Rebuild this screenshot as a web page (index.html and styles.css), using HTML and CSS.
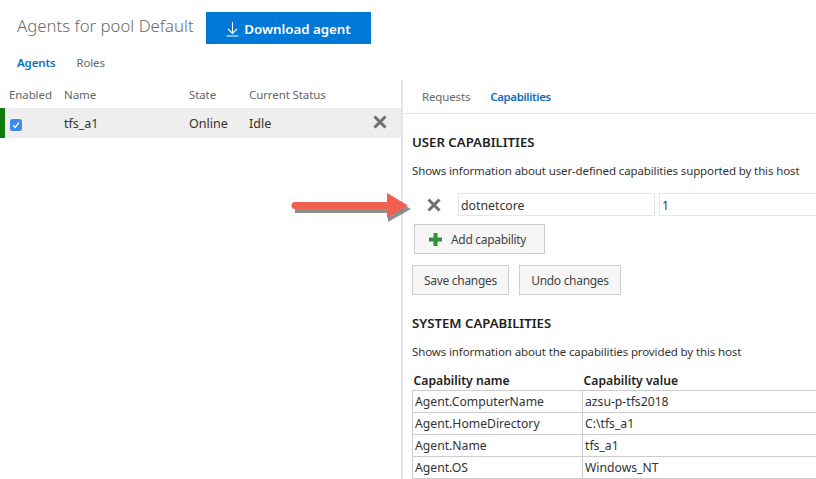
FILE: index.html
```html
<!DOCTYPE html>
<html lang="en">
<head>
    <meta charset="UTF-8">
    <title>Agents for pool Default</title>
    <link rel="stylesheet" href="styles.css">
</head>
<body>
    <header class="page-head">
        <h1>Agents for pool Default</h1>
        <button class="download-btn">
            <svg class="download-icon" width="13" height="16" viewBox="0 0 13 16"><path d="M6.500 1v11.500M2 8l4.500 4.500L11 8M.5 15h12" fill="none" stroke="#fff" stroke-width="1.100"/></svg>
            Download agent
        </button>
    </header>
    <nav class="main-tabs">
        <a class="tab active">Agents</a>
        <a class="tab">Roles</a>
    </nav>

    <div class="split">
        <section class="agents">
            <div class="agent-cols agent-head">
                <span>Enabled</span><span>Name</span><span>State</span><span>Current Status</span>
            </div>
            <div class="agent-cols agent-row">
                <span class="check">
                    <svg width="12" height="12" viewBox="0 0 12 12"><rect width="12" height="12" rx="2.500" fill="#3b8af0"/><path d="M3 6.200 5.200 8.500 9 3.500" fill="none" stroke="#fff" stroke-width="1.300"/></svg>
                </span>
                <span>tfs_a1</span><span>Online</span><span>Idle</span>
                <svg class="remove" width="14" height="14" viewBox="0 0 14 14"><path d="M1.500 1.500l11 11M12.500 1.500l-11 11" stroke="#707070" stroke-width="3"/></svg>
            </div>
        </section>

        <section class="details">
            <nav class="detail-tabs">
                <a class="tab">Requests</a>
                <a class="tab active">Capabilities</a>
            </nav>

            <h2>USER CAPABILITIES</h2>
            <p class="hint">Shows information about user-defined capabilities supported by this host</p>
            <div class="cap-row">
                <svg class="remove" width="14" height="14" viewBox="0 0 14 14"><path d="M1.500 1.500l11 11M12.500 1.500l-11 11" stroke="#707070" stroke-width="3"/></svg>
                <input class="cap-name" type="text" value="dotnetcore">
                <input class="cap-value" type="text" value="1">
            </div>
            <button class="btn add-btn">
                <svg width="15" height="15" viewBox="0 0 15 15"><path d="M7.500 1v13M1 7.500h13" stroke="#2f8f3a" stroke-width="4"/></svg>
                Add capability
            </button>
            <div class="actions">
                <button class="btn save-btn">Save changes</button>
                <button class="btn undo-btn">Undo changes</button>
            </div>

            <h2 class="system-title">SYSTEM CAPABILITIES</h2>
            <p class="hint">Shows information about the capabilities provided by this host</p>
            <table class="cap-table">
                <thead>
                    <tr><th>Capability name</th><th>Capability value</th></tr>
                </thead>
                <tbody>
                    <tr><td>Agent.ComputerName</td><td>azsu-p-tfs2018</td></tr>
                    <tr><td>Agent.HomeDirectory</td><td>C:\tfs_a1</td></tr>
                    <tr><td>Agent.Name</td><td>tfs_a1</td></tr>
                    <tr><td>Agent.OS</td><td>Windows_NT</td></tr>
                    <tr><td>&nbsp;</td><td>&nbsp;</td></tr>
                </tbody>
            </table>
        </section>
    </div>

    <!-- annotation arrow on top of the screenshot -->
    <svg class="arrow" width="130" height="40" viewBox="0 0 130 40">
        <path d="M4 18h93v-9l23 13-23 13v-9H4z" fill="#444" opacity=".6"/>
        <path d="M4 15h92V6l21 12.500L96 31v-9H4a3.500 3.500 0 0 1 0-7z" fill="#f0604f"/>
    </svg>
</body>
</html>
```

FILE: styles.css
```css
html, body {
    height: 100%;
}

body {
    margin: 0;
    overflow: hidden;
    position: relative;
    background-color: white;
    font-family: "Noto Sans", Arial, sans-serif;
    font-size: 12.5px;
    color: #333;
}

.page-head {
    display: flex;
    align-items: flex-start;
    padding: 12px 0 0 17px;
    height: 38px;
}

h1 {
    margin: 1px 0 0;
    width: 189px;
    font-size: 16.8px;
    line-height: 26px;
    font-weight: 300;
    color: #6b6b6b;
    white-space: nowrap;
}

.download-btn {
    display: flex;
    align-items: center;
    justify-content: center;
    gap: 5px;
    width: 165px;
    height: 32px;
    padding: 1px 0 0;
    border: none;
    background-color: #0078d7;
    color: white;
    font-family: inherit;
    font-size: 13.3px;
    font-weight: 600;
}

.main-tabs {
    display: flex;
    gap: 21px;
    padding-left: 17px;
    height: 30px;
    line-height: 25px;
}

.tab {
    color: #666;
    font-size: 11.5px;
    letter-spacing: -0.15px;
}

.tab.active {
    color: #106ebe;
    font-weight: 600;
}

.split {
    display: flex;
    height: 399px;
}

.agents {
    width: 401px;
    flex: none;
    border-right: 2px solid #dfe5ea;
}

.agent-cols {
    display: grid;
    grid-template-columns: 55px 125px 60px 1fr;
    align-items: center;
    padding-left: 9px;
}

.agent-head {
    height: 28px;
    color: #666;
    font-size: 11.5px;
    letter-spacing: -0.1px;
}

.agent-row {
    position: relative;
    height: 30px;
    padding-left: 5px;
    background-color: #eee;
    border-left: 5px solid #107c10;
    grid-template-columns: 54px 125px 60px 1fr;
    color: #333;
    font-size: 12.5px;
}

.check {
    display: flex;
    padding-top: 3px;
}

.agent-row .remove {
    position: absolute;
    right: 14px;
    top: 7px;
}

.details {
    flex: 1;
    min-width: 0;
    overflow: hidden;
}

.detail-tabs {
    display: flex;
    gap: 20px;
    padding-left: 19px;
    height: 33px;
    line-height: 34px;
    border-bottom: 1px solid #e3ebf2;
}

.detail-tabs .active {
    letter-spacing: -0.4px;
}

h2 {
    margin: 19px 0 0 9px;
    font-size: 13.2px;
    line-height: 18px;
    font-weight: 600;
    color: #222;
}

.hint {
    margin: 12px 0 0 9px;
    font-size: 11.5px;
    letter-spacing: -0.12px;
    line-height: 16px;
    white-space: nowrap;
}

.cap-row {
    display: flex;
    align-items: center;
    margin-top: 14px;
    width: 500px;
    padding-left: 24px;
}

.cap-row .remove {
    margin-right: 17px;
}

.cap-row input {
    box-sizing: border-box;
    height: 23px;
    padding: 1px 2px 0;
    border: 1px solid #e6e6e6;
    font-family: inherit;
    font-size: 12.3px;
    color: #333;
}

.cap-name {
    width: 197px;
    margin-right: 4px;
}

.cap-value {
    width: 200px;
}

.btn {
    box-sizing: border-box;
    height: 30px;
    padding: 0;
    border: 1px solid #ccc;
    background-color: #f6f6f6;
    font-family: inherit;
    font-size: 12px;
    letter-spacing: -0.3px;
    color: #444;
}

.add-btn {
    display: flex;
    align-items: center;
    gap: 8px;
    margin: 8px 0 0 11px;
    padding-left: 13px;
    width: 131px;
    white-space: nowrap;
}

.actions {
    display: flex;
    gap: 10px;
    margin: 11px 0 0 9px;
}

.save-btn {
    width: 97px;
}

.undo-btn {
    width: 102px;
}

.system-title {
    margin-top: 19px;
}

.cap-table {
    margin: 11px 0 0 9px;
    width: 500px;
    table-layout: fixed;
    border-collapse: collapse;
    font-size: 12.2px;
}

.cap-table th {
    padding: 0 1px;
    height: 19px;
    line-height: 15px;
    text-align: left;
    font-weight: 600;
    color: #222;
}

.cap-table th:first-child, .cap-table td:first-child {
    width: 168px;
}

.cap-table td {
    height: 21px;
    padding: 0 2px;
    border: 1px solid #ccc;
    line-height: 21px;
    color: #333;
}

.arrow {
    position: absolute;
    left: 291px;
    top: 187px;
}
```
